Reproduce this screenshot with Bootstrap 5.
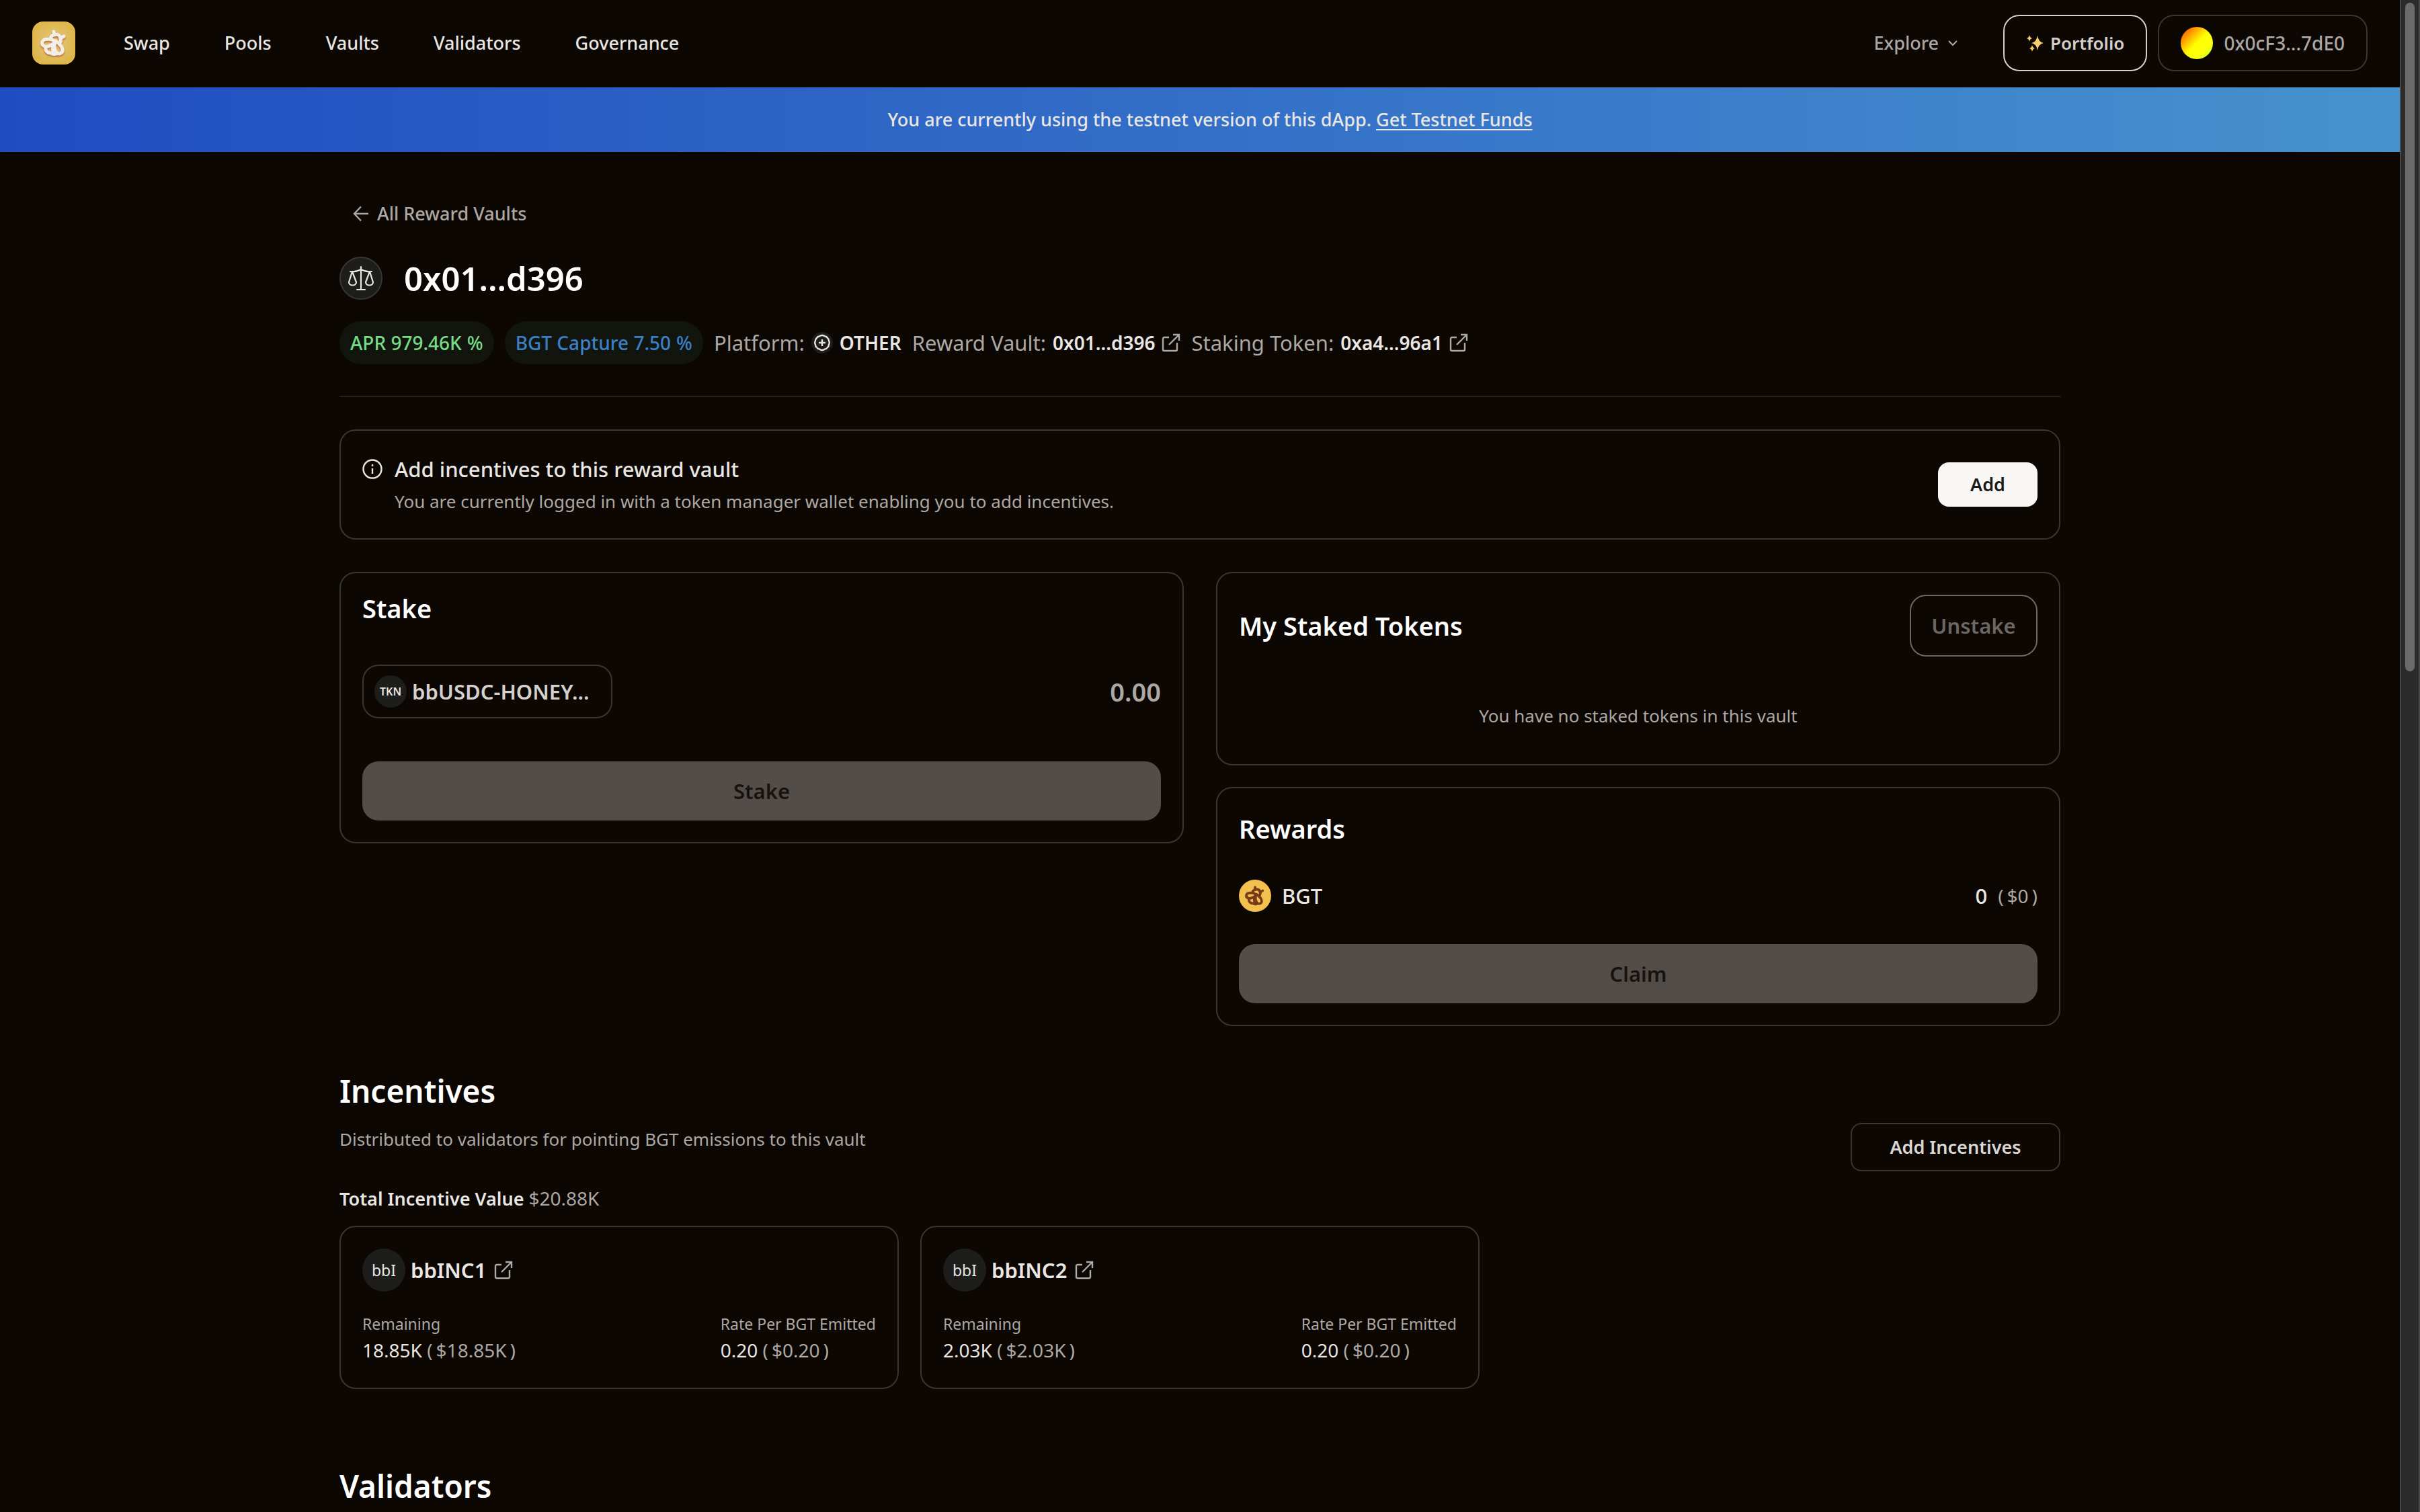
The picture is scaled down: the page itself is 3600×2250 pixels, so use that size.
<!DOCTYPE html>
<html lang="en" data-bs-theme="dark">
<head>
<meta charset="utf-8">
<meta name="viewport" content="width=device-width, initial-scale=1">
<title>Reward Vault 0x01...d396</title>
<link href="https://cdn.jsdelivr.net/npm/bootstrap@5.3.0/dist/css/bootstrap.min.css" rel="stylesheet">
<style>
  :root { --ink: #e9e6e3; --soft: #aca8a5; --line: #393532; --chip: #1d1d1b; --page: #0c0702; }
  body { background: var(--page); color: var(--ink); font-family: "Noto Sans", "Open Sans", sans-serif; font-size: 27px; line-height: 40px; }
  a { color: inherit; text-decoration: none; }
  .text-soft { color: var(--soft); }
  .fw-mid { font-weight: 500; }
  .fs-label { font-size: 23px; line-height: 32px; }
  .fs-base { font-size: 26px; line-height: 40px; }
  .fs-num { font-size: 28px; line-height: 40px; }
  .fs-lg { font-size: 31px; line-height: 44px; }

  .scroll-track { width: 30px; background: #2b2b2b; border: solid #484848; border-width: 0 2px; padding: 4px 6px; position: sticky; top: 0; height: 100vh; }
  .scroll-thumb { height: 44.4%; border-radius: 8px; background: #6b6b6b; }

  .topbar { height: 130px; padding: 0 48px 2px; }
  .topbar .main-links { gap: 81px; margin-left: 72px; }
  .logo { width: 64px; height: 64px; border-radius: 16px; background: radial-gradient(circle, #e2c888 0%, #dfb74c 70%, #dcb345 100%); }
  .logo svg { color: #f3eee8; filter: drop-shadow(0 2px 1px #b9702f); }
  .explore { margin-right: 68px; gap: 14px; }
  .pill-btn { height: 84px; border: 2px solid var(--line); border-radius: 24px; background: none; color: var(--soft); padding: 0 32px; }
  .pill-btn.strong { border-color: #d3d0cd; color: #d3d0cd; font-size: 26px; }
  .avatar { width: 48px; height: 48px; border-radius: 50%; background: linear-gradient(135deg, #ff4d00 5%, #ff9a00 25%, #ffff00 50%, #ffff0a 72%, #a8ff30 100%); }

  .banner { height: 96px; padding-left: 30px; background: linear-gradient(90deg, #204cc1, #4692ce); }
  .banner a { text-decoration: underline; text-underline-offset: 4px; text-decoration-thickness: 2px; }

  .wrap { max-width: 2560px; width: 100%; margin: 0 auto; padding-top: 72px; }
  .back { padding-left: 20px; gap: 12px; }
  .title-row { margin-top: 44px; gap: 32px; }
  .title-row h1 { font-size: 49px; line-height: 64px; margin: 0; font-weight: 600; }
  .round-icon { width: 64px; height: 64px; border-radius: 50%; background: var(--chip); font-size: 23px; flex: none; }
  .round-icon.ring { border: 2px solid var(--line); }
  .facts { margin-top: 32px; gap: 16px; }
  .stat-pill { height: 64px; border-radius: 32px; background: #11150e; padding: 0 16px; gap: 8px; font-size: 28px; font-weight: 500; }
  .stat-pill.apr { color: #76db86; }
  .stat-pill.capture { color: #3a80c6; }
  .fact { gap: 10px; font-size: 31px; }
  .fact strong, .fact a { font-size: 28px; font-weight: 600; color: var(--ink); }
  .fact a { display: flex; align-items: center; gap: 10px; }
  .rule { height: 1px; background: var(--line); margin: 48px 0; }

  .panel { border: 2px solid var(--line); border-radius: 24px; padding: 32px; }
  .notice { min-height: 164px; }
  .notice-head { gap: 18px; }
  .notice-text { gap: 6px; }
  .add-btn { width: 148px; height: 66px; border: 0; border-radius: 16px; background: #f8f7f5; color: #1c1a18; font-weight: 600; }

  .panels { display: grid; grid-template-columns: 1fr 1fr; gap: 48px; margin-top: 48px; align-items: start; }
  .panel-stack { gap: 32px; }
  .panel h2 { font-size: 38px; line-height: 40px; font-weight: 600; margin: 0; }
  .rewards h2 { line-height: 56px; }
  .big-btn { height: 88px; width: 100%; border: 0; border-radius: 24px; background: #534d49; color: #18120e; font-size: 31px; font-weight: 600; }
  .stake-row { margin: 64px 0; }
  .token-btn { width: 372px; height: 80px; border: 2px solid var(--line); border-radius: 24px; background: none; color: #d3d0cd; padding: 0 16px; gap: 8px; font-size: 31px; font-weight: 600; }
  .token-dot { width: 48px; height: 48px; border-radius: 50%; background: var(--chip); font-size: 16px; color: var(--ink); flex: none; }
  .amount { flex: 1; min-width: 0; border: 0; background: none; text-align: right; font-size: 38px; line-height: 48px; font-weight: 600; color: var(--ink); outline: 0; padding: 0; }
  .amount::placeholder { color: var(--soft); opacity: 1; }
  .unstake-btn { width: 190px; height: 92px; border: 2px solid #6c6763; border-radius: 24px; background: none; color: #6c6763; font-size: 31px; font-weight: 600; padding: 0; }
  .empty { margin: 68px 0 20px; text-align: center; }
  .reward-row { margin: 48px 0; gap: 16px; height: 48px; }

  .section-title { font-size: 46px; line-height: 56px; font-weight: 600; margin: 0; }
  .incentives { margin-top: 68px; }
  .outline-btn { width: 312px; height: 72px; border: 2px solid var(--line); border-radius: 16px; background: none; color: #d9d6d3; font-weight: 600; margin-bottom: -28px; }
  .cards3 { display: grid; grid-template-columns: repeat(3, 1fr); gap: 32px; margin-top: 20px; }
  .token-name { gap: 12px; }
  .figures { margin-top: 32px; padding-bottom: 4px; }
  .figures .fs-label { margin-bottom: 3px; }
  .usd { color: var(--soft); }
  .usd span { margin: 0 5px; }
  .validators { padding-top: 116px; }
</style>
</head>
<body>
<svg width="0" height="0" class="position-absolute" aria-hidden="true">
  <symbol id="bee" viewBox="0 0 64 64">
    <g fill="none" stroke="currentColor" stroke-width="5" stroke-linecap="round" stroke-linejoin="round">
      <path d="M32 15l1 5M47 22l-5 3"/>
      <path d="M27 25c2-7 13-8 15-1 1 4 0 7-2 9"/>
      <path d="M34 30c-5-5-17-5-19 0-2 6 5 9 11 6 3-1 6-3 8-6z"/>
      <path d="M35 29c-3 6-3 12 1 17 4 4 10 1 9-5-1-5-6-9-10-12z"/>
      <path d="M20 38c-1 6 3 9 8 9 2 2 5 2 8 1M30 36l1 9"/>
    </g>
  </symbol>
  <symbol id="ext" viewBox="0 0 28 28">
    <path d="M11 6H4a2 2 0 0 0-2 2v16a2 2 0 0 0 2 2h17a2 2 0 0 0 2-2V14M11 17 26 2M17 2h9v9" fill="none" stroke="currentColor" stroke-width="2.4"/>
  </symbol>
</svg>

<div class="d-flex">
<div class="flex-grow-1 overflow-hidden">
  <header class="topbar d-flex align-items-center fw-mid">
    <a href="#" class="logo d-block" aria-label="Home"><svg class="d-block" width="64" height="64"><use href="#bee"/></svg></a>
    <nav class="main-links d-flex" aria-label="Main">
      <a href="#">Swap</a><a href="#">Pools</a><a href="#">Vaults</a><a href="#">Validators</a><a href="#">Governance</a>
    </nav>
    <div class="d-flex align-items-center ms-auto">
      <a href="#" class="explore d-flex align-items-center text-soft">Explore
        <svg width="14" height="10" viewBox="0 0 14 10" fill="none" stroke="currentColor" stroke-width="2"><path d="M1 2l6 6 6-6"/></svg></a>
      <button type="button" class="pill-btn strong d-flex align-items-center gap-2 fw-semibold me-3">
        <svg width="28" height="28" viewBox="0 0 28 28" fill="#f5cf6a"><path d="M17 3q1.500 9.500 9 11-7.500 1.500-9 11-1.500-9.500-9-11 7.500-1.500 9-11zM5 2q.7 4 4 5-3.300 1-4 5-.7-4-4-5 3.300-1 4-5zM9 17q.7 4 4 5-3.300 1-4 5-.7-4-4-5 3.300-1 4-5z"/></svg>Portfolio</button>
      <button type="button" class="pill-btn fs-num d-flex align-items-center gap-3 fw-mid"><span class="avatar"></span>0x0cF3...7dE0</button>
    </div>
  </header>

  <div class="banner d-flex align-items-center justify-content-center fw-mid">
    <span>You are currently using the testnet version of this dApp. <a href="#">Get Testnet Funds</a></span>
  </div>

  <main class="wrap">
    <a href="#" class="back d-flex align-items-center text-soft fw-mid">
      <svg width="24" height="24" viewBox="0 0 24 24" fill="none" stroke="currentColor" stroke-width="2.400"><path d="M23 12H2M12 1.500 2 12l10 10.500"/></svg>All Reward Vaults</a>

    <div class="title-row d-flex align-items-center">
      <span class="round-icon ring d-flex align-items-center justify-content-center">
        <svg width="40" height="40" viewBox="0 0 40 40" fill="none" stroke="#e9e6e3" stroke-width="2.200" stroke-linecap="round" stroke-linejoin="round"><path d="M20 3v34M14 37h12M4 10c6 1 10 0 16-3 6 3 10 4 16 3M7 10 2 26c0 6 11 6 11 0zM33 10l-6 16c0 6 11 6 11 0z"/></svg></span>
      <h1>0x01...d396</h1>
    </div>

    <div class="facts d-flex align-items-center flex-wrap">
      <span class="stat-pill apr d-flex align-items-center">APR 979.46K<span>%</span></span>
      <span class="stat-pill capture d-flex align-items-center">BGT Capture 7.50<span>%</span></span>
      <span class="fact d-flex align-items-center text-soft">Platform:
        <svg width="32" height="32" viewBox="0 0 32 32"><circle cx="16" cy="16" r="16" fill="#1d1d1b"/><path d="M16 5q2.500 0 4 1.500 2.500 0 4 2.500 2 1.500 2 4 1.500 3 0 6 0 2.500-2 4-1.500 2.500-4 2.500-1.500 1.500-4 1.500t-4-1.500q-2.500 0-4-2.500-2-1.500-2-4-1.500-3 0-6 0-2.500 2-4 1.500-2.500 4-2.500 1.500-1.500 4-1.500zM16 11v10M11 16h10" fill="none" stroke="#e9e6e3" stroke-width="2.400" stroke-linejoin="round"/></svg>
        <strong>OTHER</strong></span>
      <span class="fact d-flex align-items-center text-soft">Reward Vault: <a href="#">0x01...d396 <svg class="text-soft" width="28" height="28"><use href="#ext"/></svg></a></span>
      <span class="fact d-flex align-items-center text-soft">Staking Token: <a href="#">0xa4...96a1 <svg class="text-soft" width="28" height="28"><use href="#ext"/></svg></a></span>
    </div>

    <div class="rule"></div>

    <section class="panel notice d-flex align-items-center justify-content-between py-0">
      <div class="d-flex notice-head">
        <svg width="30" height="44" viewBox="0 0 30 44" fill="none" stroke="#e9e6e3" stroke-width="2.400"><circle cx="15" cy="22" r="13.500"/><path d="M15 21v8M15 15v3"/></svg>
        <div class="notice-text d-flex flex-column">
          <div class="fs-lg fw-mid">Add incentives to this reward vault</div>
          <div class="fs-base text-soft">You are currently logged in with a token manager wallet enabling you to add incentives.</div>
        </div>
      </div>
      <button type="button" class="add-btn">Add</button>
    </section>

    <div class="panels">
      <section class="panel">
        <h2>Stake</h2>
        <div class="stake-row d-flex align-items-center justify-content-between">
          <button type="button" class="token-btn d-flex align-items-center"><span class="token-dot d-flex align-items-center justify-content-center">TKN</span>bbUSDC-HONEY...</button>
          <input class="amount" type="text" placeholder="0.00" aria-label="Stake amount">
        </div>
        <button type="button" class="big-btn" disabled>Stake</button>
      </section>

      <div class="panel-stack d-flex flex-column">
        <section class="panel">
          <div class="d-flex align-items-center justify-content-between">
            <h2>My Staked Tokens</h2>
            <button type="button" class="unstake-btn" disabled>Unstake</button>
          </div>
          <p class="empty fs-base text-soft">You have no staked tokens in this vault</p>
        </section>
        <section class="panel rewards">
          <h2>Rewards</h2>
          <div class="reward-row d-flex align-items-center">
            <svg width="48" height="48" viewBox="0 0 48 48" style="color:#773a1b"><circle cx="24" cy="24" r="24" fill="#f2c04c"/><use href="#bee" width="48" height="48"/></svg>
            <span class="fs-lg fw-mid">BGT</span>
            <span class="fs-lg fw-mid ms-auto">0</span>
            <span class="usd fs-num">(<span>$0</span>)</span>
          </div>
          <button type="button" class="big-btn" disabled>Claim</button>
        </section>
      </div>
    </div>

    <section class="incentives">
      <div class="d-flex align-items-end justify-content-between">
        <div>
          <h2 class="section-title">Incentives</h2>
          <p class="fs-base text-soft mb-0 mt-4">Distributed to validators for pointing BGT emissions to this vault</p>
        </div>
        <button type="button" class="outline-btn">Add Incentives</button>
      </div>
      <div class="mt-5"><span class="fw-semibold">Total Incentive Value</span> <span class="fs-num text-soft">$20.88K</span></div>

      <div class="cards3">
        <article class="panel">
          <div class="d-flex align-items-center gap-2">
            <span class="round-icon d-flex align-items-center justify-content-center">bbI</span>
            <a href="#" class="token-name fs-lg fw-semibold d-flex align-items-center">bbINC1 <svg class="text-soft" width="28" height="28"><use href="#ext"/></svg></a>
          </div>
          <div class="figures fs-num d-flex justify-content-between">
            <div><div class="fs-label text-soft">Remaining</div><div>18.85K <span class="usd">(<span>$18.85K</span>)</span></div></div>
            <div><div class="fs-label text-soft">Rate Per BGT Emitted</div><div>0.20 <span class="usd">(<span>$0.20</span>)</span></div></div>
          </div>
        </article>
        <article class="panel">
          <div class="d-flex align-items-center gap-2">
            <span class="round-icon d-flex align-items-center justify-content-center">bbI</span>
            <a href="#" class="token-name fs-lg fw-semibold d-flex align-items-center">bbINC2 <svg class="text-soft" width="28" height="28"><use href="#ext"/></svg></a>
          </div>
          <div class="figures fs-num d-flex justify-content-between">
            <div><div class="fs-label text-soft">Remaining</div><div>2.03K <span class="usd">(<span>$2.03K</span>)</span></div></div>
            <div><div class="fs-label text-soft">Rate Per BGT Emitted</div><div>0.20 <span class="usd">(<span>$0.20</span>)</span></div></div>
          </div>
        </article>
      </div>
    </section>

    <section class="validators"><h2 class="section-title">Validators</h2></section>
  </main>
</div>
<div class="scroll-track flex-shrink-0" aria-hidden="true"><div class="scroll-thumb"></div></div>
</div>
<script src="https://cdn.jsdelivr.net/npm/bootstrap@5.3.0/dist/js/bootstrap.bundle.min.js"></script>
</body>
</html>
